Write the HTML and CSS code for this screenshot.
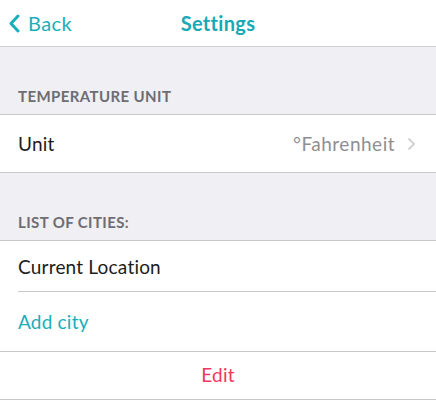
FILE: index.html
```html
<!DOCTYPE html>
<html>
<head>
<meta charset="utf-8">
<link rel="stylesheet" href="styles.css">
</head>
<body>
<div class="screen">
  <header class="nav">
    <a class="back">
      <svg class="back-icon" width="12" height="19" viewBox="0 0 12 19"><path d="M10 2 L3 9.5 L10 17" fill="none" stroke="#1aaeba" stroke-width="3" stroke-linecap="round" stroke-linejoin="round"/></svg>
      <span>Back</span>
    </a>
    <div class="title">Settings</div>
  </header>
  <div class="section-head">TEMPERATURE UNIT</div>
  <div class="group">
    <div class="row row-unit">
      <span class="label">Unit</span>
      <span class="value">°Fahrenheit</span>
      <svg class="chev" width="9" height="14" viewBox="0 0 9 14"><path d="M1.5 1.5 L7 7 L1.5 12.5" fill="none" stroke="#c7c7cc" stroke-width="1.6"/></svg>
    </div>
  </div>
  <div class="section-head">LIST OF CITIES:</div>
  <div class="group">
    <div class="row row-city inset">
      <span class="label">Current Location</span>
    </div>
    <div class="row row-add">
      <span class="label teal">Add city</span>
    </div>
  </div>
  <div class="group edit-group">
    <div class="row row-edit">
      <span class="edit">Edit</span>
    </div>
  </div>
</div>
</body>
</html>
```
FILE: styles.css
```css
* { box-sizing: border-box; margin: 0; padding: 0; }
html, body { background: #ffffff; }
body {
  font-family: "Lato", "Open Sans", sans-serif;
  width: 436px;
  height: 400px;
  overflow: hidden;
}
.screen { display: flex; flex-direction: column; background: #efeff4; min-height: 400px; }
.nav {
  height: 47px;
  background: #ffffff;
  border-bottom: 1px solid #cfcfd3;
  display: flex;
  align-items: center;
  justify-content: center;
  position: relative;
}
.back {
  position: absolute;
  left: 8px;
  top: 0;
  height: 46px;
  display: flex;
  align-items: center;
  gap: 8px;
  color: #1aaeba;
  font-size: 20px;
  letter-spacing: 0.4px;
}
.back-icon { display: block; }
.title {
  color: #17a9b5;
  font-size: 20px;
  font-weight: 700;
  letter-spacing: 0.3px;
}
.section-head {
  height: 67px;
  padding: 0 18px 9px;
  display: flex;
  align-items: flex-end;
  color: #6d6d72;
  font-size: 15px;
  font-weight: 700;
  letter-spacing: 0.4px;
}
.group {
  background: #ffffff;
  border-top: 1px solid #c8c7cc;
  border-bottom: 1px solid #c8c7cc;
}
.row {
  display: flex;
  align-items: center;
  padding: 0 18px;
  font-size: 19px;
  color: #1c1c1c;
  letter-spacing: 0.2px;
}
.row-unit { height: 57px; padding-right: 20px; }
.label { flex: 1; }
.value { color: #8e8e93; margin-right: 12px; letter-spacing: 0.5px; }
.chev { display: block; }
.row-city { height: 51px; position: relative; }
.inset::after {
  content: "";
  position: absolute;
  left: 18px;
  right: 0;
  bottom: 0;
  height: 1px;
  background: #c8c7cc;
}
.row-add { height: 59px; padding-bottom: 1px; }
.teal { color: #1aaeba; }
.edit-group { border-top: none; }
.row-edit { height: 47px; justify-content: center; padding-bottom: 2px; }
.edit { color: #f0385f; }
```
